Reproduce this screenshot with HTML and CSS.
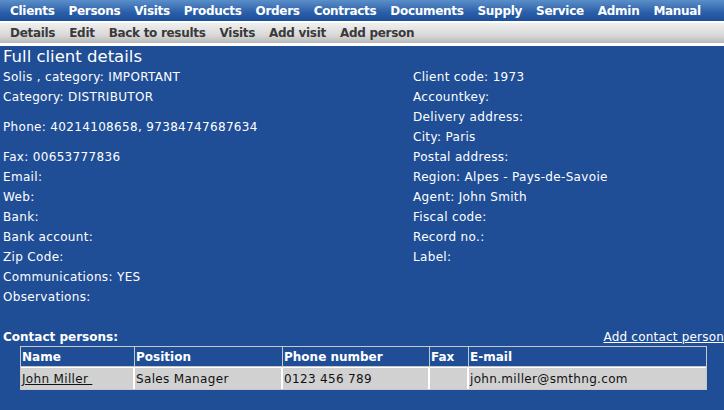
FILE: index.html
```html
<!DOCTYPE html>
<html>
<head>
<meta charset="utf-8">
<link rel="stylesheet" href="styles.css">
</head>
<body>
<div class="topnav">
  <a>Clients</a><a>Persons</a><a>Visits</a><a>Products</a><a>Orders</a><a>Contracts</a><a>Documents</a><a>Supply</a><a>Service</a><a>Admin</a><a>Manual</a>
</div>
<div class="subnav">
  <a>Details</a><a>Edit</a><a>Back to results</a><a>Visits</a><a>Add visit</a><a>Add person</a>
</div>
<div class="main">
  <h1 class="title">Full client details</h1>
  <div class="cols">
    <div class="col left">
      <div class="row">Solis , category: IMPORTANT</div>
      <div class="row">Category: DISTRIBUTOR</div>
      <div class="row tall">Phone: 40214108658, 97384747687634</div>
      <div class="row tall">Fax: 00653777836</div>
      <div class="row">Email:</div>
      <div class="row">Web:</div>
      <div class="row">Bank:</div>
      <div class="row">Bank account:</div>
      <div class="row">Zip Code:</div>
      <div class="row">Communications: YES</div>
      <div class="row">Observations:</div>
    </div>
    <div class="col right">
      <div class="row">Client code: 1973</div>
      <div class="row">Accountkey:</div>
      <div class="row">Delivery address:</div>
      <div class="row">City: Paris</div>
      <div class="row">Postal address:</div>
      <div class="row">Region: Alpes - Pays-de-Savoie</div>
      <div class="row">Agent: John Smith</div>
      <div class="row">Fiscal code:</div>
      <div class="row">Record no.:</div>
      <div class="row">Label:</div>
    </div>
  </div>
  <div class="contacts-head">
    <span class="contacts-title">Contact persons:</span>
    <a class="add-contact">Add contact person</a>
  </div>
  <table class="contacts">
    <tr>
      <th class="c-name">Name</th>
      <th class="c-pos">Position</th>
      <th class="c-phone">Phone number</th>
      <th class="c-fax">Fax</th>
      <th class="c-mail">E-mail</th>
    </tr>
    <tr>
      <td><a class="link">John Miller&nbsp;</a></td>
      <td>Sales Manager</td>
      <td>0123 456 789</td>
      <td></td>
      <td>john.miller@smthng.com</td>
    </tr>
  </table>
</div>
</body>
</html>
```
FILE: styles.css
```css
html, body {
  margin: 0;
  padding: 0;
}
body {
  width: 724px;
  height: 410px;
  overflow: hidden;
  background: #ffffff;
  font-family: "DejaVu Sans", Verdana, sans-serif;
  font-size: 12px;
  color: #ffffff;
}
.topnav {
  height: 21px;
  background: linear-gradient(#5b8fc9, #2a5ea8 60%, #1d4f9a);
  display: flex;
  align-items: center;
  padding-left: 10px;
  gap: 14px;
  font-weight: bold;
  font-size: 12px;
  letter-spacing: -0.3px;
  color: #ffffff;
}
.subnav {
  margin-top: 2px;
  height: 20px;
  background: linear-gradient(#efefef, #d9d9d9 60%, #b8b8b8);
  display: flex;
  align-items: center;
  padding-left: 10px;
  gap: 14px;
  font-weight: bold;
  font-size: 12px;
  letter-spacing: -0.3px;
  color: #3a3a3a;
}
.main {
  margin-top: 3px;
  background: #1f4e96;
  height: 364px;
  padding: 0 0 0 3px;
  letter-spacing: 0.33px;
}
.title {
  margin: 0;
  padding-top: 1px;
  font-size: 16.5px;
  font-weight: normal;
  line-height: 20px;
  letter-spacing: 0;
}
.cols {
  display: grid;
  grid-template-columns: 410px 1fr;
}
.row {
  height: 20px;
  line-height: 20px;
  white-space: nowrap;
}
.col.left .row.tall {
  height: 30px;
  display: flex;
  align-items: flex-end;
}
.contacts-head {
  margin-top: 23px;
  display: flex;
  justify-content: space-between;
  align-items: flex-start;
  height: 16px;
  line-height: 14px;
}
.contacts-title {
  font-weight: bold;
  letter-spacing: 0;
}
.add-contact {
  text-decoration: underline;
  letter-spacing: 0.2px;
}
.contacts {
  margin-left: 17px;
  width: 687px;
  border-collapse: separate;
  border-spacing: 0;
  border: 1px solid #c8c8c8;
}
.contacts th {
  text-align: left;
  font-weight: bold;
  letter-spacing: 0;
  height: 19px;
  padding: 0 1px;
  border-right: 1px solid #c8c8c8;
  border-bottom: 1px solid #c8c8c8;
}
.contacts th:last-child,
.contacts td:last-child {
  border-right: none;
}
.contacts td {
  background: #d1d1d1;
  color: #111111;
  height: 21px;
  padding: 0 1px;
  border-top: 1px solid #ffffff;
  border-right: 2px solid #ffffff;
}
.c-name { width: 111px; }
.c-pos { width: 145px; }
.c-phone { width: 144px; }
.c-fax { width: 36px; }
.link {
  color: #111111;
  text-decoration: underline;
}
```
